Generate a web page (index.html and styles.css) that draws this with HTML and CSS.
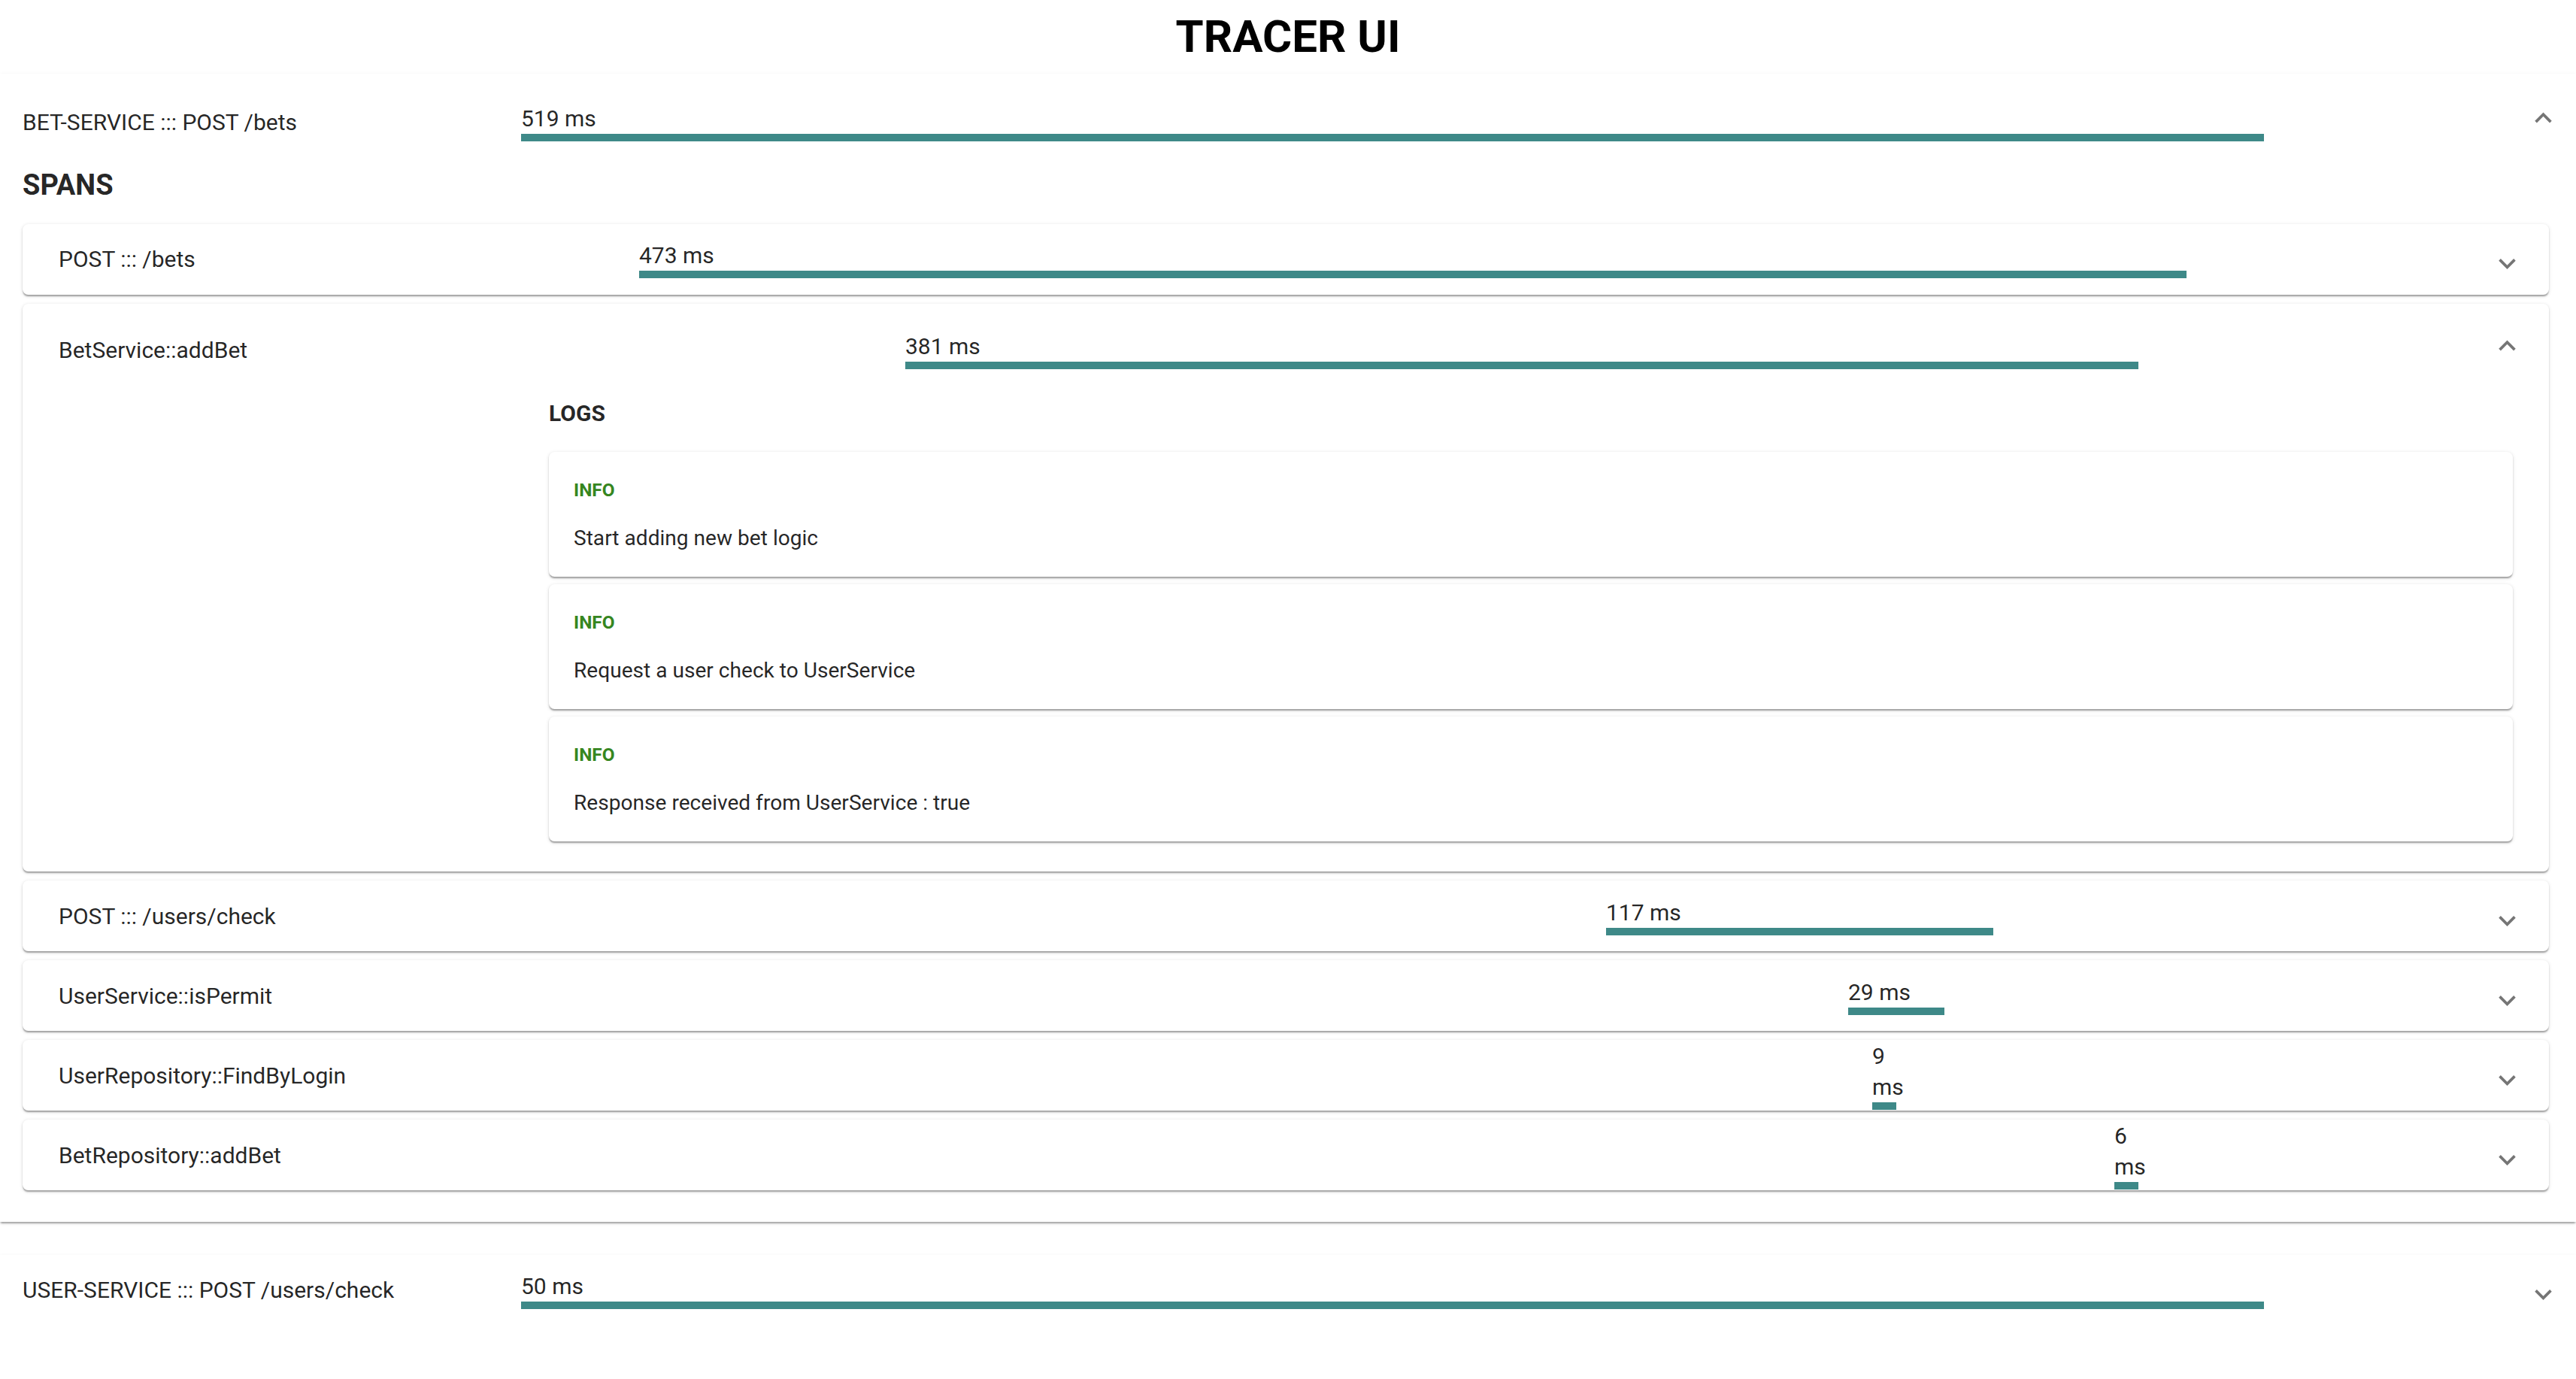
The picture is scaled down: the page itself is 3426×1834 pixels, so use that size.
FILE: index.html
```html
<!DOCTYPE html>
<html lang="en">
<head>
<meta charset="utf-8">
<title>Tracer UI</title>
<link rel="stylesheet" href="styles.css">
</head>
<body>
<header class="app-header">
  <h1 class="app-title">TRACER UI</h1>
</header>
<main class="traces">
  <section class="trace trace--open">
    <div class="trace-summary">
      <div class="trace-name">BET-SERVICE ::: POST /bets</div>
      <div class="timeline">
        <div class="duration" style="margin-left:0;width:2318px">
          <div class="duration-label">519 ms</div>
          <div class="duration-bar"></div>
        </div>
      </div>
      <div class="expand-icon expand-icon--up">
        <svg viewBox="0 0 24 24" width="45" height="45"><path d="M12 8l-6 6 1.41 1.41L12 10.83l4.59 4.58L18 14z"/></svg>
      </div>
    </div>
    <div class="trace-details">
      <h2 class="section-title">SPANS</h2>
      <div class="span-list">
        <article class="span">
          <div class="span-summary">
            <div class="span-name">POST ::: /bets</div>
            <div class="timeline">
              <div class="duration" style="margin-left:126px;width:2058px">
                <div class="duration-label">473 ms</div>
                <div class="duration-bar"></div>
              </div>
            </div>
            <div class="expand-icon expand-icon--down">
              <svg viewBox="0 0 24 24" width="45" height="45"><path d="M16.59 8.59L12 13.17 7.41 8.59 6 10l6 6 6-6z"/></svg>
            </div>
          </div>
        </article>
        <article class="span span--open">
          <div class="span-summary">
            <div class="span-name">BetService::addBet</div>
            <div class="timeline">
              <div class="duration" style="margin-left:480px;width:1640px">
                <div class="duration-label">381 ms</div>
                <div class="duration-bar"></div>
              </div>
            </div>
            <div class="expand-icon expand-icon--up">
              <svg viewBox="0 0 24 24" width="45" height="45"><path d="M12 8l-6 6 1.41 1.41L12 10.83l4.59 4.58L18 14z"/></svg>
            </div>
          </div>
          <div class="span-details">
            <div class="logs">
              <h3 class="logs-title">LOGS</h3>
              <div class="log">
                <div class="log-level">INFO</div>
                <div class="log-message">Start adding new bet logic</div>
              </div>
              <div class="log">
                <div class="log-level">INFO</div>
                <div class="log-message">Request a user check to UserService</div>
              </div>
              <div class="log">
                <div class="log-level">INFO</div>
                <div class="log-message">Response received from UserService : true</div>
              </div>
            </div>
          </div>
        </article>
        <article class="span">
          <div class="span-summary">
            <div class="span-name">POST ::: /users/check</div>
            <div class="timeline">
              <div class="duration" style="margin-left:1412px;width:515px">
                <div class="duration-label">117 ms</div>
                <div class="duration-bar"></div>
              </div>
            </div>
            <div class="expand-icon expand-icon--down">
              <svg viewBox="0 0 24 24" width="45" height="45"><path d="M16.59 8.59L12 13.17 7.41 8.59 6 10l6 6 6-6z"/></svg>
            </div>
          </div>
        </article>
        <article class="span">
          <div class="span-summary">
            <div class="span-name">UserService::isPermit</div>
            <div class="timeline">
              <div class="duration" style="margin-left:1734px;width:128px">
                <div class="duration-label">29 ms</div>
                <div class="duration-bar"></div>
              </div>
            </div>
            <div class="expand-icon expand-icon--down">
              <svg viewBox="0 0 24 24" width="45" height="45"><path d="M16.59 8.59L12 13.17 7.41 8.59 6 10l6 6 6-6z"/></svg>
            </div>
          </div>
        </article>
        <article class="span">
          <div class="span-summary">
            <div class="span-name">UserRepository::FindByLogin</div>
            <div class="timeline">
              <div class="duration" style="margin-left:1766px;width:32px">
                <div class="duration-label">9 ms</div>
                <div class="duration-bar"></div>
              </div>
            </div>
            <div class="expand-icon expand-icon--down">
              <svg viewBox="0 0 24 24" width="45" height="45"><path d="M16.59 8.59L12 13.17 7.41 8.59 6 10l6 6 6-6z"/></svg>
            </div>
          </div>
        </article>
        <article class="span">
          <div class="span-summary">
            <div class="span-name">BetRepository::addBet</div>
            <div class="timeline">
              <div class="duration" style="margin-left:2088px;width:32px">
                <div class="duration-label">6 ms</div>
                <div class="duration-bar"></div>
              </div>
            </div>
            <div class="expand-icon expand-icon--down">
              <svg viewBox="0 0 24 24" width="45" height="45"><path d="M16.59 8.59L12 13.17 7.41 8.59 6 10l6 6 6-6z"/></svg>
            </div>
          </div>
        </article>
      </div>
    </div>
  </section>
  <section class="trace">
    <div class="trace-summary">
      <div class="trace-name">USER-SERVICE ::: POST /users/check</div>
      <div class="timeline">
        <div class="duration" style="margin-left:0;width:2318px">
          <div class="duration-label">50 ms</div>
          <div class="duration-bar"></div>
        </div>
      </div>
      <div class="expand-icon expand-icon--down">
        <svg viewBox="0 0 24 24" width="45" height="45"><path d="M16.59 8.59L12 13.17 7.41 8.59 6 10l6 6 6-6z"/></svg>
      </div>
    </div>
  </section>
</main>
</body>
</html>
```
FILE: styles.css
```css
* {
  box-sizing: border-box;
}

html, body {
  margin: 0;
  padding: 0;
  background: #ffffff;
}

body {
  font-family: Roboto, "Liberation Sans", "Noto Sans", sans-serif;
  color: rgba(0, 0, 0, 0.87);
  font-size: 30px;
  line-height: 41px;
}

.app-header {
  height: 98px;
  padding-top: 9.6px;
}

.app-title {
  margin: 0;
  text-align: center;
  font-size: 60px;
  line-height: 78.7px;
  font-weight: 700;
  color: #000000;
}

.traces {
  display: flex;
  flex-direction: column;
  gap: 44px;
}

.trace {
  background: #ffffff;
  box-shadow: 0 3.75px 1.9px -1.9px rgba(0, 0, 0, 0.2),
              0 1.9px 1.9px 0 rgba(0, 0, 0, 0.14),
              0 1.9px 5.6px 0 rgba(0, 0, 0, 0.12);
}

.trace-summary {
  display: flex;
  align-items: center;
  padding: 21.5px 21.5px 21.5px 30px;
}

.trace--open > .trace-summary {
  padding-top: 38.5px;
  padding-bottom: 36px;
}

.trace-name {
  flex: 0 0 663px;
  font-size: 30px;
  line-height: 41px;
  white-space: nowrap;
}

.timeline {
  flex: 1 1 auto;
  height: 51px;
  display: flex;
  align-items: center;
}

.duration {
  flex: none;
}

.duration-label {
  font-size: 30px;
  line-height: 41px;
}

.duration-bar {
  height: 10px;
  background: #3e8988;
}

.expand-icon {
  flex: 0 0 45px;
  width: 45px;
  height: 45px;
  display: flex;
}

.expand-icon svg {
  display: block;
  fill: rgba(0, 0, 0, 0.54);
}

.expand-icon--down {
  transform: translateY(6px);
}

.expand-icon--up {
  transform: translateY(-5.5px);
}

.trace-details {
  padding: 0 36px 29.3px 30px;
}

.section-title {
  margin: 0 0 29.2px;
  font-size: 38px;
  line-height: 45px;
  font-weight: 700;
}

.span-list {
  display: flex;
  flex-direction: column;
}

.span {
  background: #ffffff;
  border-radius: 7.5px;
  margin-bottom: 12px;
  box-shadow: 0 3.75px 1.9px -1.9px rgba(0, 0, 0, 0.2),
              0 1.9px 1.9px 0 rgba(0, 0, 0, 0.14),
              0 1.9px 5.6px 0 rgba(0, 0, 0, 0.12);
}

.span-summary {
  display: flex;
  align-items: center;
  padding: 21.5px 33.5px 21.5px 48px;
}

.span--open > .span-summary {
  padding-top: 36.3px;
  padding-bottom: 38.5px;
}

.span-name {
  flex: 0 0 646px;
  font-size: 30px;
  line-height: 41px;
  white-space: nowrap;
}

.span-details {
  padding: 0 48px 30px 48px;
}

.logs {
  margin-left: 652px;
}

.logs-title {
  margin: 0 0 31px;
  font-size: 30px;
  line-height: 41px;
  font-weight: 700;
}

.log {
  background: #ffffff;
  border-radius: 7.5px;
  margin-bottom: 10px;
  padding: 30px 30px 33px 33px;
  box-shadow: 0 3.75px 1.9px -1.9px rgba(0, 0, 0, 0.2),
              0 1.9px 1.9px 0 rgba(0, 0, 0, 0.14),
              0 1.9px 5.6px 0 rgba(0, 0, 0, 0.12);
}

.log-level {
  font-size: 24.4px;
  line-height: 41px;
  font-weight: 700;
  color: #36861f;
  margin-bottom: 24.5px;
}

.log-message {
  font-size: 28.1px;
  line-height: 37.5px;
}
```
